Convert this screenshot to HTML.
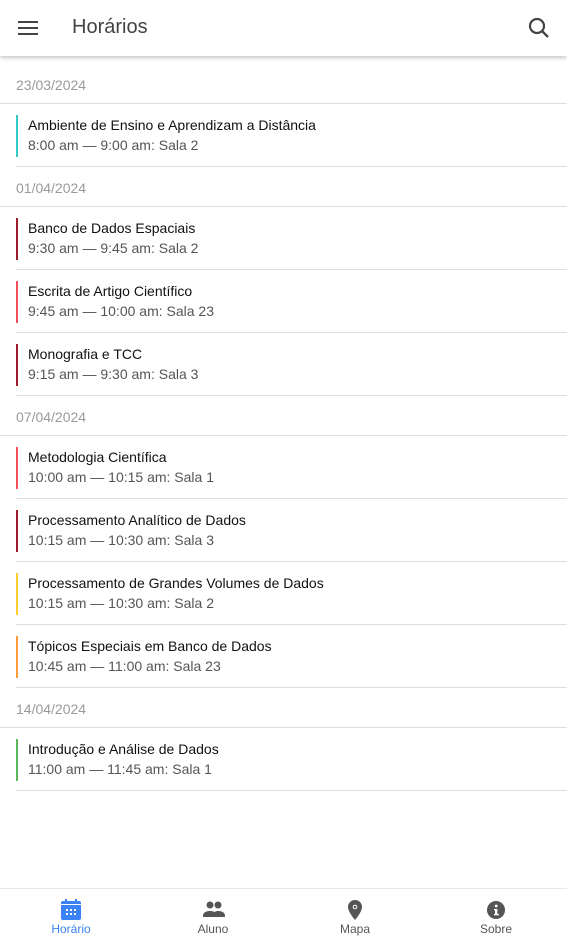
<!DOCTYPE html>
<html><head><meta charset="utf-8"><style>
*{margin:0;padding:0;box-sizing:border-box}
body{width:567px;height:945px;background:#fff;font-family:"Liberation Sans",Arial,sans-serif;position:relative;overflow:hidden}
.hdr{position:absolute;left:0;top:0;width:567px;height:56px;background:#fff;box-shadow:0 2px 4px rgba(0,0,0,.22);z-index:2}
.hdr .t{position:absolute;left:72px;top:16px;font-size:20px;color:#444}
.list{position:absolute;top:64px;left:0;width:567px}
.d{height:40px;line-height:42px;padding-left:16px;font-size:14px;color:#9a9a9a;border-bottom:1px solid #ddd}
.i{height:63px;margin-left:16px;border-bottom:1px solid #ddd;position:relative}
.i .b{position:absolute;left:0;top:11px;width:2px;height:42px}
.i .a{position:absolute;left:12px;top:13px;font-size:14px;color:#111}
.i .s{position:absolute;left:12px;top:33px;font-size:14px;color:#555}
.nav{position:absolute;left:0;top:888px;width:567px;height:57px;border-top:1px solid #e8e8e8;background:#fff}
.n{position:absolute;top:0;width:142px;text-align:center;font-size:12px;color:#555}
.n svg{position:absolute;left:61px;top:10px}
.n span{position:absolute;left:0;right:0;top:33px}
</style></head><body>
<div class="hdr">
<svg style="position:absolute;left:18px;top:18px" width="20" height="20" viewBox="0 0 20 20"><rect x="0" y="3" width="20" height="2" fill="#444"/><rect x="0" y="9" width="20" height="2" fill="#444"/><rect x="0" y="15" width="20" height="2" fill="#444"/></svg>
<div class="t">Horários</div>
<svg style="position:absolute;left:528px;top:17px" width="22" height="22" viewBox="0 0 22 22"><circle cx="9" cy="9" r="7" stroke="#444" stroke-width="2.2" fill="none"/><line x1="14" y1="14" x2="20" y2="20" stroke="#444" stroke-width="2.4"/></svg>
</div>
<div class="list">
<div class="d" style="padding-left:16px">23/03/2024</div>
<div class="i"><div class="b" style="background:#33c9c9"></div><div class="a">Ambiente de Ensino e Aprendizam a Distância</div><div class="s">8:00 am — 9:00 am: Sala 2</div></div>
<div class="d">01/04/2024</div>
<div class="i"><div class="b" style="background:#9b1c2a"></div><div class="a">Banco de Dados Espaciais</div><div class="s">9:30 am — 9:45 am: Sala 2</div></div>
<div class="i"><div class="b" style="background:#f0505a"></div><div class="a">Escrita de Artigo Científico</div><div class="s">9:45 am — 10:00 am: Sala 23</div></div>
<div class="i"><div class="b" style="background:#9b1c2a"></div><div class="a">Monografia e TCC</div><div class="s">9:15 am — 9:30 am: Sala 3</div></div>
<div class="d">07/04/2024</div>
<div class="i"><div class="b" style="background:#f0505a"></div><div class="a">Metodologia Científica</div><div class="s">10:00 am — 10:15 am: Sala 1</div></div>
<div class="i"><div class="b" style="background:#9b1c2a"></div><div class="a">Processamento Analítico de Dados</div><div class="s">10:15 am — 10:30 am: Sala 3</div></div>
<div class="i"><div class="b" style="background:#ffcc33"></div><div class="a">Processamento de Grandes Volumes de Dados</div><div class="s">10:15 am — 10:30 am: Sala 2</div></div>
<div class="i"><div class="b" style="background:#ff9a3a"></div><div class="a">Tópicos Especiais em Banco de Dados</div><div class="s">10:45 am — 11:00 am: Sala 23</div></div>
<div class="d">14/04/2024</div>
<div class="i"><div class="b" style="background:#5cb85c"></div><div class="a">Introdução e Análise de Dados</div><div class="s">11:00 am — 11:45 am: Sala 1</div></div>
</div>
<div class="nav">
<div class="n" style="left:0;color:#3b82f6"><svg width="20" height="22" viewBox="0 0 20 22"><rect x="0" y="2" width="20" height="19" rx="2" fill="#3b82f6"/><rect x="4" y="0" width="2" height="4" fill="#3b82f6"/><rect x="14" y="0" width="2" height="4" fill="#3b82f6"/><rect x="0" y="5" width="20" height="1" fill="#fff"/><g fill="#fff"><rect x="5" y="10" width="2" height="2"/><rect x="9" y="10" width="2" height="2"/><rect x="13" y="10" width="2" height="2"/><rect x="5" y="14" width="2" height="2"/><rect x="9" y="14" width="2" height="2"/><rect x="13" y="14" width="2" height="2"/></g></svg><span>Horário</span></div>
<div class="n" style="left:142px"><svg width="22" height="22" viewBox="0 0 22 22"><circle cx="7" cy="6" r="3.5" fill="#555"/><circle cx="15" cy="6" r="3.5" fill="#555"/><path d="M0 17c0-4 4-5 7-5s7 1 7 5v1H0z" fill="#555"/><path d="M10 17c0-4 3-5 5-5 3 0 7 1 7 5v1H10z" fill="#555"/></svg><span>Aluno</span></div>
<div class="n" style="left:284px"><svg width="20" height="22" viewBox="0 0 20 22"><path d="M10 1a7 7 0 0 0-7 7c0 5 7 13 7 13s7-8 7-13a7 7 0 0 0-7-7z" fill="#555"/><circle cx="10" cy="8" r="2.3" fill="#fff"/><circle cx="10" cy="8" r="1.3" fill="#555"/></svg><span>Mapa</span></div>
<div class="n" style="left:425px"><svg width="20" height="22" viewBox="0 0 20 22"><circle cx="10" cy="11" r="9" fill="#555"/><rect x="9" y="10" width="2.4" height="6" fill="#fff"/><rect x="8" y="10" width="2" height="1.3" fill="#fff"/><rect x="8" y="15" width="5" height="1.3" fill="#fff"/><circle cx="10.2" cy="7" r="1.4" fill="#fff"/></svg><span>Sobre</span></div>
</div>
</body></html>
